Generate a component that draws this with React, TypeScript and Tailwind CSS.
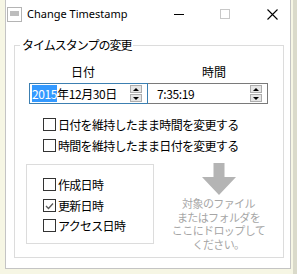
import React from "react";

const jp = { fontFamily: '"Noto Sans CJK JP", "Noto Sans", sans-serif' };

function CheckBox({ label, checked = false, className = "" }: { label: string; checked?: boolean; className?: string }) {
  return (
    <div className={`flex items-center h-[13px] ${className}`}>
      <div className="w-[13px] h-[13px] border border-[#333333] bg-white flex items-center justify-center shrink-0">
        {checked && (
          <svg width="9" height="8" viewBox="0 0 9 8">
            <path d="M1 4l2.5 2.5L8 1.5" fill="none" stroke="#5a5a5a" strokeWidth="1.3" />
          </svg>
        )}
      </div>
      <span className="ml-[2px] text-[12px] leading-[13px] tracking-[-0.7px] text-black whitespace-nowrap" style={jp}>
        {label}
      </span>
    </div>
  );
}

function Spin() {
  return (
    <div className="flex flex-col gap-[1px] mr-[5px]">
      <div className="w-[12px] h-[8px] bg-[#e6e6e6] border border-[#adadad] flex items-center justify-center">
        <svg width="6" height="3" viewBox="0 0 6 3">
          <path d="M0 3L3 0L6 3Z" fill="#000" />
        </svg>
      </div>
      <div className="w-[12px] h-[8px] bg-[#e6e6e6] border border-[#adadad] flex items-center justify-center">
        <svg width="6" height="3" viewBox="0 0 6 3">
          <path d="M0 0L6 0L3 3Z" fill="#000" />
        </svg>
      </div>
    </div>
  );
}

export default function App() {
  return (
    <div className="w-[297px] h-[274px] bg-[#f6f6e4] relative overflow-hidden flex">
      {/* Window */}
      <div className="ml-[5px] w-[286px] h-[269px] bg-white border-x border-b border-[#c4c4c4] flex flex-col">
        {/* Title bar */}
        <div className="h-[28px] flex items-center shrink-0">
          <div className="ml-[1px] w-[15px] h-[15px] border border-[#b4b4b4] bg-white flex flex-col items-center">
            <div className="mt-[3px] w-[9px] h-[5px] bg-[#bdbdbd]" />
          </div>
          <span className="ml-[5px] text-[11px] text-black" style={{ fontFamily: '"Noto Sans", sans-serif' }}>
            Change Timestamp
          </span>
          <div className="ml-auto w-[10px] h-[1px] bg-black" />
          <div className="ml-[36px] w-[10px] h-[10px] border border-[#c8c8c8]" />
          <svg className="ml-[37px] mr-[12px]" width="11" height="11" viewBox="0 0 11 11">
            <path d="M0.5 0.5L10.5 10.5M10.5 0.5L0.5 10.5" stroke="#000" strokeWidth="1.1" />
          </svg>
        </div>

        {/* Outer group */}
        <div className="relative ml-[8px] mt-[17px] w-[270px] h-[213px] border border-[#dcdcdc] flex flex-col">
          <span
            className="absolute left-[5px] top-[-8px] bg-white px-[2px] text-[12px] leading-[14px] tracking-[-1px] text-black"
            style={jp}
          >
            タイムスタンプの変更
          </span>

          <div className="flex mt-[20px] h-[12px] items-center text-[12px] leading-[12px] text-black" style={jp}>
            <span className="ml-[56px]">日付</span>
            <span className="ml-[107px]">時間</span>
          </div>

          <div className="flex mt-[5px] ml-[14px]">
            <div className="w-[119px] h-[21px] border border-[#3c7fb1] flex items-center">
              <span className="ml-[2px] text-[12px] leading-[15px] text-black tracking-[-0.4px] flex-1" style={jp}>
                <span className="bg-[#3399ff] text-white">2015</span>年12月30日
              </span>
              <Spin />
            </div>
            <div className="w-[120px] h-[21px] border border-[#7a7a7a] border-l-0 flex items-center">
              <span className="ml-[9px] text-[12px] leading-[15px] text-black tracking-[-0.4px] flex-1" style={jp}>
                7:35:19
              </span>
              <Spin />
            </div>
          </div>

          <CheckBox className="ml-[28px] mt-[14px]" label="日付を維持したまま時間を変更する" />
          <CheckBox className="ml-[28px] mt-[8px]" label="時間を維持したまま日付を変更する" />

          <div className="flex mt-[12px]">
            <div className="ml-[11px] w-[128px] h-[80px] border border-[#dcdcdc] flex flex-col">
              <CheckBox className="ml-[16px] mt-[13px]" label="作成日時" />
              <CheckBox className="ml-[16px] mt-[8px]" label="更新日時" checked />
              <CheckBox className="ml-[16px] mt-[7px]" label="アクセス日時" />
            </div>
            <div className="flex-1 flex flex-col items-center mt-[-1px]">
              <svg width="34" height="32" viewBox="0 0 34 32">
                <path d="M11.5 0H22.5V14H34L17 32L0 14H11.5Z" fill="#b4b4b4" />
              </svg>
              <div
                className="mt-[2px] text-[11px] leading-[13.5px] text-[#a6a6a6] text-center tracking-[-0.6px]"
                style={jp}
              >
                対象のファイル
                <br />
                またはフォルダを
                <br />
                ここにドロップして
                <br />
                ください。
              </div>
            </div>
          </div>
        </div>
      </div>
      <div className="absolute right-0 top-0 w-[4px] h-[274px] bg-[#dadaca]" />
    </div>
  );
}
